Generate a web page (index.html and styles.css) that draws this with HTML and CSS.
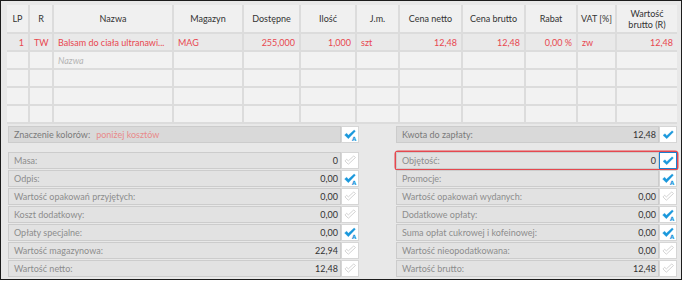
FILE: index.html
```html
<!DOCTYPE html>
<html lang="pl">
<head>
    <meta charset="UTF-8">
    <title>Dokument</title>
    <link rel="stylesheet" href="styles.css">
</head>
<body>
    <div class="frame">
        <table class="grid">
            <colgroup>
                <col style="width:22px"><col style="width:24px"><col style="width:120px"><col style="width:70px">
                <col style="width:57px"><col style="width:56px"><col style="width:43px"><col style="width:63px">
                <col style="width:63px"><col style="width:52px"><col style="width:39px"><col style="width:61px">
            </colgroup>
            <thead>
                <tr>
                    <th>LP</th><th>R</th><th>Nazwa</th><th>Magazyn</th><th>Dostępne</th><th>Ilość</th>
                    <th>J.m.</th><th>Cena netto</th><th>Cena brutto</th><th>Rabat</th><th>VAT [%]</th>
                    <th>Wartość<br>brutto (R)</th>
                </tr>
            </thead>
            <tbody>
                <tr class="active">
                    <td class="num">1</td><td>TW</td><td>Balsam do ciała ultranawi...</td><td>MAG</td>
                    <td class="num">255,000</td><td class="num">1,000</td><td>szt</td><td class="num">12,48</td>
                    <td class="num">12,48</td><td class="num">0,00 %</td><td>zw</td><td class="num">12,48</td>
                </tr>
                <tr>
                    <td></td><td></td><td class="hint">Nazwa</td><td></td><td></td><td></td>
                    <td></td><td></td><td></td><td></td><td></td><td></td>
                </tr>
                <tr><td></td><td></td><td></td><td></td><td></td><td></td><td></td><td></td><td></td><td></td><td></td><td></td></tr>
                <tr><td></td><td></td><td></td><td></td><td></td><td></td><td></td><td></td><td></td><td></td><td></td><td></td></tr>
                <tr><td></td><td></td><td></td><td></td><td></td><td></td><td></td><td></td><td></td><td></td><td></td><td></td></tr>
            </tbody>
        </table>

        <div class="summary">
            <div class="col left">
                <div class="row legend">
                    <div class="field">Znaczenie kolorów:<span class="below">poniżej kosztów</span></div>
                    <span class="chk"><svg viewBox="0 0 18 18"><path class="ok" d="M2.5 9.5 L5 7.5 L7 10 L14 3.5 L15.5 5 L7 14 Z"/><text x="11" y="16.5">A</text></svg></span>
                </div>
                <div class="spacer"></div>
                <div class="row"><div class="field"><span>Masa:</span><b>0</b></div><span class="chk"><svg viewBox="0 0 18 18"><path class="off" d="M3 9.5 L5 7.5 L7 9.5 L13.5 3.5 L15.5 5.5 L7 13.5 Z"/></svg></span></div>
                <div class="row"><div class="field"><span>Odpis:</span><b>0,00</b></div><span class="chk"><svg viewBox="0 0 18 18"><path class="ok" d="M2.5 9.5 L5 7.5 L7 10 L14 3.5 L15.5 5 L7 14 Z"/><text x="11" y="16.5">A</text></svg></span></div>
                <div class="row"><div class="field"><span>Wartość opakowań przyjętych:</span><b>0,00</b></div><span class="chk"><svg viewBox="0 0 18 18"><path class="off" d="M3 9.5 L5 7.5 L7 9.5 L13.5 3.5 L15.5 5.5 L7 13.5 Z"/></svg></span></div>
                <div class="row"><div class="field"><span>Koszt dodatkowy:</span><b>0,00</b></div><span class="chk"><svg viewBox="0 0 18 18"><path class="off" d="M3 9.5 L5 7.5 L7 9.5 L13.5 3.5 L15.5 5.5 L7 13.5 Z"/></svg></span></div>
                <div class="row"><div class="field"><span>Opłaty specjalne:</span><b>0,00</b></div><span class="chk"><svg viewBox="0 0 18 18"><path class="ok" d="M2.5 9.5 L5 7.5 L7 10 L14 3.5 L15.5 5 L7 14 Z"/><text x="11" y="16.5">A</text></svg></span></div>
                <div class="row"><div class="field"><span>Wartość magazynowa:</span><b>22,94</b></div><span class="chk"><svg viewBox="0 0 18 18"><path class="off" d="M3 9.5 L5 7.5 L7 9.5 L13.5 3.5 L15.5 5.5 L7 13.5 Z"/></svg></span></div>
                <div class="row"><div class="field"><span>Wartość netto:</span><b>12,48</b></div><span class="chk"><svg viewBox="0 0 18 18"><path class="off" d="M3 9.5 L5 7.5 L7 9.5 L13.5 3.5 L15.5 5.5 L7 13.5 Z"/></svg></span></div>
            </div>

            <div class="col right">
                <div class="row legend">
                    <div class="field"><span>Kwota do zapłaty:</span><b>12,48</b></div>
                    <span class="chk"><svg viewBox="0 0 18 18"><path class="ok" d="M3 10 L5.5 8 L7.5 10.5 L14 4.5 L15.5 6 L7.5 14 Z"/></svg></span>
                </div>
                <div class="spacer"></div>
                <div class="row focus"><div class="field"><span>Objętość:</span><b>0</b></div><span class="chk"><svg viewBox="0 0 18 18"><path class="ok" d="M3 10 L5.5 8 L7.5 10.5 L14 4.5 L15.5 6 L7.5 14 Z"/></svg></span></div>
                <div class="row"><div class="field"><span>Promocje:</span><b></b></div><span class="chk"><svg viewBox="0 0 18 18"><path class="ok" d="M2.5 9.5 L5 7.5 L7 10 L14 3.5 L15.5 5 L7 14 Z"/><text x="11" y="16.5">A</text></svg></span></div>
                <div class="row"><div class="field"><span>Wartość opakowań wydanych:</span><b>0,00</b></div><span class="chk"><svg viewBox="0 0 18 18"><path class="off" d="M3 9.5 L5 7.5 L7 9.5 L13.5 3.5 L15.5 5.5 L7 13.5 Z"/></svg></span></div>
                <div class="row"><div class="field"><span>Dodatkowe opłaty:</span><b>0,00</b></div><span class="chk"><svg viewBox="0 0 18 18"><path class="ok" d="M2.5 9.5 L5 7.5 L7 10 L14 3.5 L15.5 5 L7 14 Z"/><text x="11" y="16.5">A</text></svg></span></div>
                <div class="row"><div class="field"><span>Suma opłat cukrowej i kofeinowej:</span><b>0,00</b></div><span class="chk"><svg viewBox="0 0 18 18"><path class="ok" d="M2.5 9.5 L5 7.5 L7 10 L14 3.5 L15.5 5 L7 14 Z"/><text x="11" y="16.5">A</text></svg></span></div>
                <div class="row"><div class="field"><span>Wartość nieopodatkowana:</span><b>0,00</b></div><span class="chk"><svg viewBox="0 0 18 18"><path class="off" d="M3 9.5 L5 7.5 L7 9.5 L13.5 3.5 L15.5 5.5 L7 13.5 Z"/></svg></span></div>
                <div class="row"><div class="field"><span>Wartość brutto:</span><b>12,48</b></div><span class="chk"><svg viewBox="0 0 18 18"><path class="off" d="M3 9.5 L5 7.5 L7 9.5 L13.5 3.5 L15.5 5.5 L7 13.5 Z"/></svg></span></div>
            </div>
        </div>
    </div>
</body>
</html>
```

FILE: styles.css
```css
* {
    margin: 0;
    padding: 0;
    box-sizing: border-box;
}

body {
    background: #ffffff;
    font-family: 'Lato', 'Open Sans', sans-serif;
    font-size: 9px;
    color: #333;
}

.frame {
    width: 682px;
    height: 280px;
    border: 1px solid #1c1c1c;
    background: #e8e8e8;
    padding: 4px 4px 0 6px;
}

/* tabela pozycji */
.grid {
    table-layout: fixed;
    width: 670px;
    border-collapse: collapse;
    background: #f2f2f2;
    border-bottom: 2px solid #d8d8d8;
}

.grid th {
    height: 28px;
    font-weight: normal;
    color: #333;
    text-align: center;
    line-height: 11px;
    background: #f0f0f0;
    border-right: 2px solid #dcdcdc;
    border-bottom: 2px solid #dcdcdc;
}

.grid td {
    height: 18px;
    padding: 0 4px;
    white-space: nowrap;
    overflow: hidden;
    color: #e8474f;
    border-right: 2px solid #dcdcdc;
    border-bottom: 2px solid #dcdcdc;
}

.grid th:last-child, .grid td:last-child {
    border-right: none;
}

.grid tr.active td {
    background: #e9e9e9;
}

.grid td.num {
    text-align: right;
}

.grid td.hint {
    color: #b5b5b5;
    font-style: italic;
}

/* podsumowanie */
.summary {
    display: flex;
    gap: 37px;
    margin-top: 2px;
}

.col {
    display: flex;
    flex-direction: column;
    gap: 1px;
}

.left {
    width: 352px;
    margin-left: 1px;
}

.right {
    width: 282px;
}

.spacer {
    height: 7px;
}

.row {
    display: flex;
    height: 17px;
}

.field {
    flex: 1;
    display: flex;
    justify-content: space-between;
    align-items: center;
    padding: 0 2px 0 5px;
    background: #e2e2e2;
    border: 1px solid #cccccc;
    color: #8d8d8d;
    white-space: nowrap;
}

.field b {
    font-weight: normal;
    color: #333;
}

.legend .field {
    justify-content: flex-start;
    background: #d9d9d9;
    color: #7a7a7a;
}

.right .legend .field {
    justify-content: space-between;
}

.below {
    margin-left: 6px;
    color: #e88a8a;
}

.chk {
    width: 18px;
    background: #fff;
    border: 1px solid #d6d6d6;
    display: flex;
}

.chk svg {
    width: 16px;
    height: 15px;
}

.chk .ok {
    fill: #1a98dc;
    stroke: #1a98dc;
    stroke-width: 0.4;
    stroke-linejoin: round;
}

.chk .off {
    fill: #fff;
    stroke: #bdbdbd;
    stroke-width: 0.8;
    stroke-linejoin: round;
}

.chk text {
    font-family: 'DejaVu Sans', sans-serif;
    font-size: 7px;
    font-weight: bold;
    fill: #1a98dc;
}

.focus {
    box-shadow: 0 0 0 1.5px #e5484f;
    border-radius: 2px;
}

.focus .chk {
    border-color: #1a7fd0;
}
```
